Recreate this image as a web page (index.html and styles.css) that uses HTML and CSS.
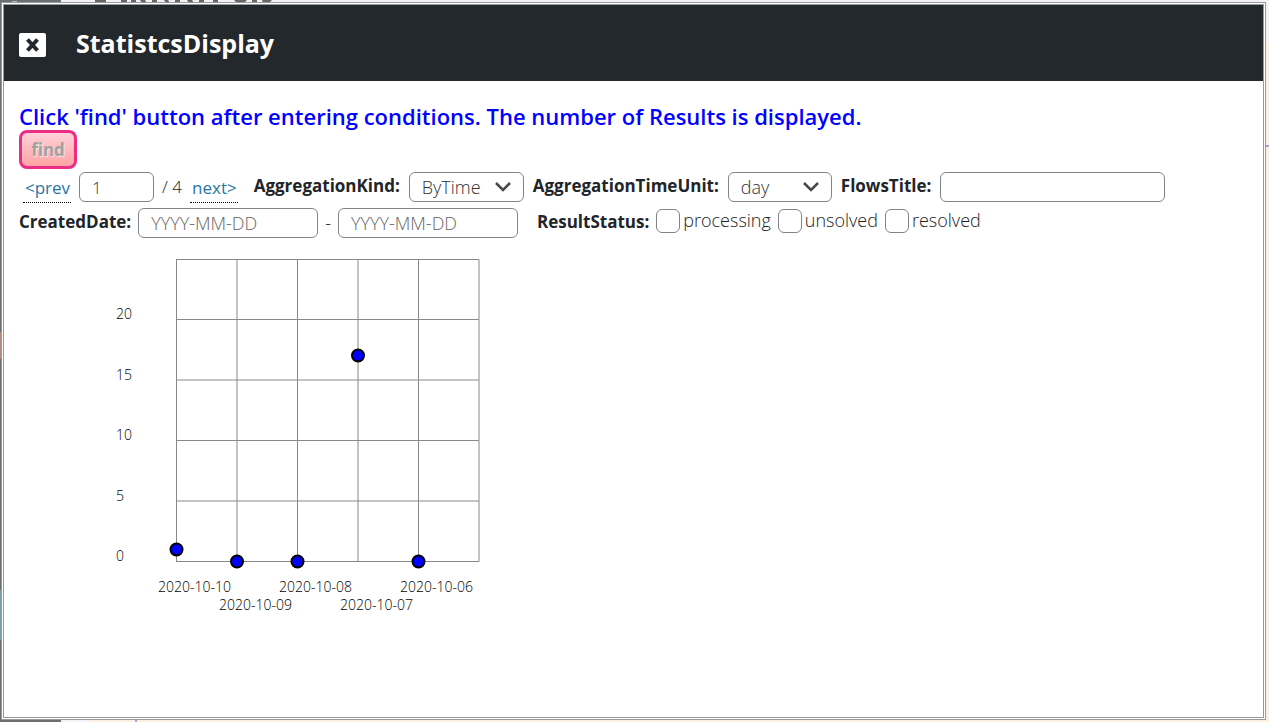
FILE: index.html
```
<!DOCTYPE html>
<html lang="en">
<head>
<meta charset="utf-8">
<title>StatistcsDisplay</title>
<link rel="stylesheet" href="styles.css">
</head>
<body>
<svg class="backdrop-marks" viewBox="0 0 280 3" width="280" height="3" aria-hidden="true">
  <path fill="#666" d="M95 0h11v3h-11zM121 0h6v3h-6zM131 0h5v3h-5zM140 0h5l2 3h-5zM152 0h5v3h-5zM164 0h4l2 3h-4zM175 0h5v3h-5zM187 0h5l2 3h-5zM199 0h5v3h-5zM213 0h5v3h-5zM234 0h13l-3 3h-7zM252 0h5v3h-5zM262 0h10l-3 3h-6z"/>
  <path fill="#bbb" d="M12 1h5v1h-5z"/>
</svg>
<main class="dialog">
  <header class="dialog-header">
    <button class="close" type="button" aria-label="Close">
      <svg viewBox="0 0 27 24" width="27" height="24" aria-hidden="true">
        <rect width="27" height="24" rx="2" fill="#fff"/>
        <path d="M8.500 6.500l10 11M18.500 6.500l-10 11" stroke="#23282c" stroke-width="4"/>
      </svg>
    </button>
    <h1 class="title">StatistcsDisplay</h1>
  </header>
  <div class="dialog-body">
    <p class="notice">Click 'find' button after entering conditions. The number of Results is displayed.</p>
    <button class="find" type="button" disabled>find</button>
    <form class="filters">
      <div class="row row-kind">
        <div class="pager">
          <a class="page-link" href="#prev">&lt;prev</a>
          <input class="box page" type="text" value="1" aria-label="Page">
          <span class="total">/ 4</span>
          <a class="page-link" href="#next">next&gt;</a>
        </div>
        <label class="name" for="kind">AggregationKind:</label>
        <select class="box kind" id="kind"><option>ByTime</option></select>
        <label class="name" for="unit">AggregationTimeUnit:</label>
        <select class="box unit" id="unit"><option>day</option></select>
        <label class="name" for="flow">FlowsTitle:</label>
        <input class="box flow" id="flow" type="text">
      </div>
      <div class="row row-date">
        <label class="name" for="from">CreatedDate:</label>
        <input class="box date" id="from" type="text" placeholder="YYYY-MM-DD">
        <span class="dash">-</span>
        <input class="box date" type="text" placeholder="YYYY-MM-DD" aria-label="CreatedDate end">
        <span class="name status">ResultStatus:</span>
        <label class="check"><input type="checkbox">processing</label>
        <label class="check"><input type="checkbox">unsolved</label>
        <label class="check"><input type="checkbox">resolved</label>
      </div>
    </form>
    <svg class="chart" viewBox="0 0 400 370" width="400" height="370" role="img" aria-label="Results by day">
      <path class="grid" d="M77.5 9.5V311.5M138 9.5V311.5M198.5 9.5V311.5M259 9.5V311.5M319.5 9.5V311.5M380 9.5V311.5M77 9.5H380M77 69.5H380M77 130H380M77 190.5H380M77 251H380M77 311.5H380"/>
      <g class="points">
        <circle cx="77.5" cy="299.5" r="6"/>
        <circle cx="138" cy="311.5" r="6"/>
        <circle cx="198.5" cy="311.5" r="6"/>
        <circle cx="259" cy="105.5" r="6"/>
        <circle cx="319.5" cy="311.5" r="6"/>
      </g>
      <g class="axis">
        <text x="17" y="69">20</text>
        <text x="17" y="130">15</text>
        <text x="17" y="190">10</text>
        <text x="17" y="251">5</text>
        <text x="17" y="311">0</text>
        <text x="59" y="342">2020-10-10</text>
        <text x="120" y="360">2020-10-09</text>
        <text x="180" y="342">2020-10-08</text>
        <text x="241" y="360">2020-10-07</text>
        <text x="301" y="342">2020-10-06</text>
      </g>
    </svg>
  </div>
</main>
</body>
</html>
```
FILE: styles.css
```
* { box-sizing: border-box; }

body {
  margin: 0;
  min-height: 100vh;
  padding: 2px 3px 2px 1px;
  display: flex;
  font: 300 18px/24px "Open Sans", "Noto Sans", sans-serif;
  color: #222;
  background:
    linear-gradient(#7d9da6, #7d9da6) 0 590px / 1px 50px no-repeat,
    linear-gradient(#b08c80, #b08c80) 0 332px / 1px 27px no-repeat,
    linear-gradient(#6c6f72, #6c6f72) 0 0 / 61px 100% no-repeat,
    linear-gradient(#a9a4d8, #a9a4d8) 135px 100% / 2px 3px no-repeat,
    linear-gradient(#a9a4d8, #a9a4d8) 100% 145px / 4px 2px no-repeat,
    linear-gradient(#f3f3f7, #f3f3f7) 0 100% / 90px 3px no-repeat,
    linear-gradient(#f3f3f7, #f3f3f7) 0 0 / 100% 43px no-repeat,
    #fdeee2;
}

.backdrop-marks {
  position: absolute;
  top: 0;
  left: 0;
}

.dialog {
  position: relative;
  flex: 1;
  min-width: 0;
  border: 3px double #999;
  background: #fff;
}

.dialog-header {
  display: flex;
  align-items: center;
  gap: 30px;
  min-height: 76px;
  padding: 0 15px;
  background: #23282c;
}

.close {
  display: flex;
  margin-top: 4px;
  padding: 0;
  border: 0;
  background: none;
}

.title {
  margin: 0;
  font-size: 25px;
  font-weight: 700;
  line-height: 36px;
  color: #fff;
}

.dialog-body { padding: 21px 15px 0; }

.notice {
  margin: 0;
  font-size: 22px;
  font-weight: 600;
  line-height: 28px;
  color: #00f;
}

.find {
  display: block;
  width: 58px;
  height: 39px;
  padding: 0;
  border: 3px solid #ec2d86;
  border-radius: 8px;
  background: linear-gradient(#ffd0d8, #ffa4a4);
  font: 700 17px/30px "Open Sans", "Noto Sans", sans-serif;
  color: #a0a0a0;
  text-shadow: 1px 1px 1px #eee;
}

.filters {
  display: grid;
  gap: 6px;
  margin-top: 3px;
}

.row {
  display: flex;
  align-items: center;
  height: 30px;
}

.row-kind { gap: 9px; }
.row-date { gap: 7px; }

.pager {
  display: flex;
  align-items: center;
  gap: 8px;
  margin: 0 7px 0 4px;
  font-size: 17px;
}

.page-link {
  margin-top: 2px;
  padding: 0 1px 0 2px;
  border-bottom: 1px dotted #000;
  line-height: 28px;
  font-weight: 400;
  color: #2676a3;
  text-decoration: none;
}

.name {
  padding-bottom: 2px;
  font-size: 17px;
  font-weight: 700;
  color: #212529;
}

.box {
  height: 30px;
  padding: 0 12px;
  border: 1px solid #7f858b;
  border-radius: 6px;
  background: #fff;
  font: inherit;
  color: #333;
}

.box::placeholder {
  color: #666;
  opacity: 1;
}

select.box {
  appearance: none;
  background: url("data:image/svg+xml,%3Csvg xmlns='http://www.w3.org/2000/svg' viewBox='0 0 16 10'%3E%3Cpath d='M1 1l7 7 7-7' fill='none' stroke='%23494949' stroke-width='2.5'/%3E%3C/svg%3E") right 12px center / 16px 10px no-repeat #fff;
}

.page { width: 75px; }
.kind { width: 115px; }
.unit { width: 104px; }
.flow { width: 225px; }
.date { width: 180px; }

.status { margin-left: 12px; }

.check {
  display: flex;
  align-items: center;
  gap: 3px;
  margin-bottom: 6px;
}

.check input {
  appearance: none;
  width: 24px;
  height: 24px;
  margin: 2px 0 0;
  border: 1px solid #7f858b;
  border-radius: 6px;
  background: #fff;
}

.chart {
  display: block;
  margin: 12px 0 0 80px;
}

.grid {
  fill: none;
  stroke: #888;
}

.points {
  fill: #00f;
  stroke: #000;
  stroke-width: 2;
}

.axis {
  fill: #000;
  font-size: 14px;
}
```
